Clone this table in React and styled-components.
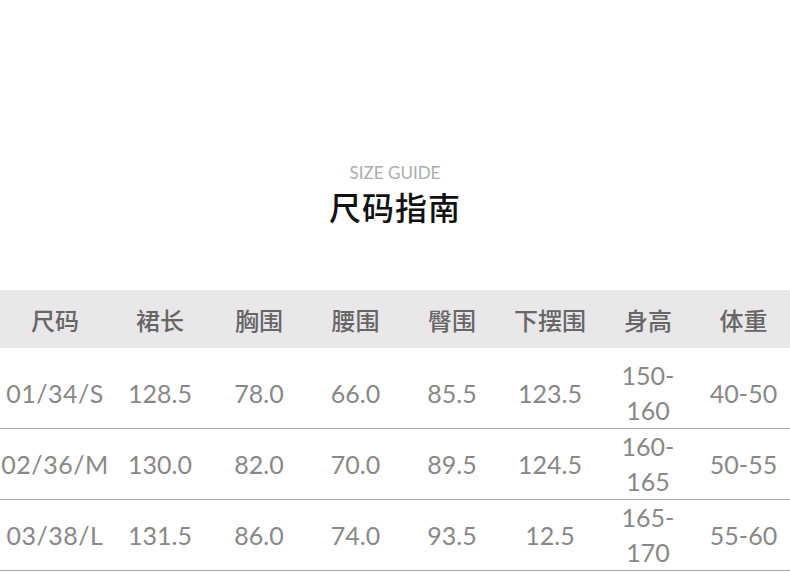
import React from 'react';
import styled, { createGlobalStyle } from 'styled-components';

const GlobalStyle = createGlobalStyle`
  html, body {
    margin: 0;
    padding: 0;
    background: #fff;
    overflow: hidden;
  }
  body {
    font-family: Lato, "Noto Sans CJK SC", sans-serif;
  }
`;

// largura de cada coluna, medida no print
const COLS = '110px 100px 98px 95px 98px 98px 98px 93px';

const Page = styled.div`
  width: 790px;
  height: 572px;
  overflow: hidden;
`;

const Heading = styled.div`
  display: flex;
  flex-direction: column;
  align-items: center;
  padding-top: 162px;
  height: 290px;
  box-sizing: border-box;
`;

const Eyebrow = styled.div`
  font-family: Lato, sans-serif;
  font-weight: 400;
  font-size: 17px;
  line-height: 22px;
  color: #acacac;
  letter-spacing: 0;
`;

const Title = styled.h2`
  margin: 2px 0 0;
  font-family: "Noto Sans CJK SC", sans-serif;
  font-weight: 500;
  font-size: 32px;
  line-height: 40px;
  color: #111;
  letter-spacing: 1px;
`;

const HeadRow = styled.div`
  display: grid;
  grid-template-columns: ${COLS};
  height: 58px;
  align-items: center;
  background: #e9e7ea;
`;

const HeadCell = styled.div`
  text-align: center;
  font-family: "Noto Sans CJK SC", sans-serif;
  font-size: 24px;
  font-weight: 500;
  color: #666;
  white-space: nowrap;
`;

const Body = styled.div`
  padding-top: 10px;
`;

const Row = styled.div`
  display: grid;
  grid-template-columns: ${COLS};
  align-items: center;
  min-height: 70px;
  border-bottom: 1px solid #a9a9a9;
`;

const Cell = styled.div`
  text-align: center;
  font-family: Lato, sans-serif;
  font-size: 25px;
  line-height: 35px;
  color: #888;
  white-space: nowrap;
  letter-spacing: ${props => (props.$first ? '0.5px' : '0')};
`;

const headers = ['尺码', '裙长', '胸围', '腰围', '臀围', '下摆围', '身高', '体重'];

const rows = [
  ['01/34/S', '128.5', '78.0', '66.0', '85.5', '123.5', ['150-', '160'], '40-50'],
  ['02/36/M', '130.0', '82.0', '70.0', '89.5', '124.5', ['160-', '165'], '50-55'],
  ['03/38/L', '131.5', '86.0', '74.0', '93.5', '12.5', ['165-', '170'], '55-60'],
];

const App = () => {
  return (
    <Page>
      <GlobalStyle />
      <Heading>
        <Eyebrow>SIZE GUIDE</Eyebrow>
        <Title>尺码指南</Title>
      </Heading>
      <HeadRow>
        {headers.map(h => (
          <HeadCell key={h}>{h}</HeadCell>
        ))}
      </HeadRow>
      <Body>
        {rows.map(r => (
          <Row key={r[0]}>
            {r.map((v, i) => (
              <Cell key={i} $first={i === 0}>
                {Array.isArray(v) ? (
                  <>
                    {v[0]}
                    <br />
                    {v[1]}
                  </>
                ) : (
                  v
                )}
              </Cell>
            ))}
          </Row>
        ))}
      </Body>
    </Page>
  );
};

export default App;
